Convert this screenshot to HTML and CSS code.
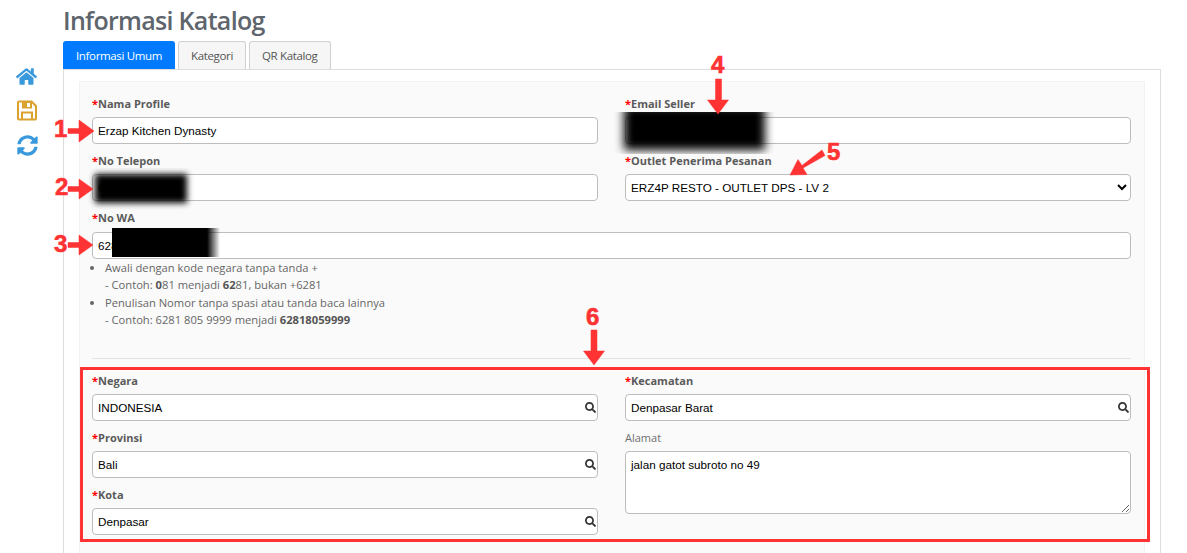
FILE: index.html
```html
<!DOCTYPE html>
<html lang="id">
<head>
<meta charset="utf-8">
<title>Informasi Katalog</title>
<link rel="stylesheet" href="styles.css">
</head>
<body>
<div class="page">
  <aside class="sidebar">
    <svg class="side-icon blue home" viewBox="0 0 576 512"><path d="M280.37 148.26L96 300.11V464a16 16 0 0 0 16 16l112.06-.29a16 16 0 0 0 15.92-16V368a16 16 0 0 1 16-16h64a16 16 0 0 1 16 16v95.64a16 16 0 0 0 16 16.05L464 480a16 16 0 0 0 16-16V300L295.67 148.26a12.19 12.19 0 0 0-15.3 0zM571.6 251.47L488 182.56V44.05a12 12 0 0 0-12-12h-56a12 12 0 0 0-12 12v72.61L318.47 43a48 48 0 0 0-61 0L4.34 251.47a12 12 0 0 0-1.6 16.9l25.5 31A12 12 0 0 0 45.15 301l235.22-193.74a12.19 12.19 0 0 1 15.3 0L530.9 301a12 12 0 0 0 16.9-1.6l25.5-31a12 12 0 0 0-1.7-16.93z"/></svg>
    <svg class="side-icon gold save" viewBox="0 0 20 20"><path fill-rule="evenodd" d="M2 0H15L20 5V18A2 2 0 0 1 18 20H2A2 2 0 0 1 0 18V2A2 2 0 0 1 2 0ZM2 2V18H4V11H16V18H18V6L15 3V8H5V2ZM6 13V18H14V13ZM10 2.500V6.500H13V2.500Z"/></svg>
    <svg class="side-icon blue sync" viewBox="0 0 512 512"><path d="M370.72 133.28C339.458 104.008 298.888 87.962 255.848 88c-77.458.068-144.328 53.178-162.791 126.85-1.344 5.363-6.122 9.15-11.651 9.15H24.103c-7.498 0-13.194-6.807-11.807-14.176C33.933 94.924 134.813 8 256 8c66.448 0 126.791 26.136 171.315 68.685L463.03 40.97C478.149 25.851 504 36.559 504 57.941V192c0 13.255-10.745 24-24 24H345.941c-21.382 0-32.09-25.851-16.971-40.971l41.75-41.749zM32 296h134.059c21.382 0 32.09 25.851 16.971 40.971l-41.75 41.75c31.262 29.273 71.835 45.319 114.876 45.28 77.418-.07 144.315-53.144 162.787-126.849 1.344-5.363 6.122-9.15 11.651-9.15h57.304c7.498 0 13.194 6.807 11.807 14.176C478.067 417.076 377.187 504 256 504c-66.448 0-126.791-26.136-171.315-68.685L48.97 471.03C33.851 486.149 8 475.441 8 454.059V320c0-13.255 10.745-24 24-24z"/></svg>
  </aside>

  <main class="main">
    <h1 class="title">Informasi Katalog</h1>
    <nav class="tabs">
      <a class="tab active">Informasi Umum</a>
      <a class="tab">Kategori</a>
      <a class="tab">QR Katalog</a>
    </nav>
    <div class="pane">
      <form class="panel">
        <div class="grid">
          <div class="field">
            <label class="label"><span class="req">*</span>Nama Profile</label>
            <input class="control" value="Erzap Kitchen Dynasty">
          </div>
          <div class="field">
            <label class="label"><span class="req">*</span>Email Seller</label>
            <input class="control" value="zzzzzzzzzzzzzzzzzzm">
          </div>
          <div class="field">
            <label class="label"><span class="req">*</span>No Telepon</label>
            <input class="control" value="6281">
          </div>
          <div class="field">
            <label class="label"><span class="req">*</span>Outlet Penerima Pesanan</label>
            <select class="control select">
              <option>ERZ4P RESTO - OUTLET DPS - LV 2</option>
            </select>
          </div>
        </div>
        <div class="field wa">
          <label class="label"><span class="req">*</span>No WA</label>
          <input class="control" value="628">
          <ul class="notes">
            <li>Awali dengan kode negara tanpa tanda +<br>- Contoh: <b>0</b>81 menjadi <b>62</b>81, bukan +6281</li>
            <li>Penulisan Nomor tanpa spasi atau tanda baca lainnya<br>- Contoh: 6281 805 9999 menjadi <b>62818059999</b></li>
          </ul>
        </div>
        <hr class="rule">
        <section class="address">
          <div class="address-col">
            <div class="field">
              <label class="label"><span class="req">*</span>Negara</label>
              <div class="search-box">
                <input class="control" value="INDONESIA">
                <svg class="search" viewBox="0 0 512 512"><use href="#search-glyph"/></svg>
              </div>
            </div>
            <div class="field">
              <label class="label"><span class="req">*</span>Provinsi</label>
              <div class="search-box">
                <input class="control" value="Bali">
                <svg class="search" viewBox="0 0 512 512"><use href="#search-glyph"/></svg>
              </div>
            </div>
            <div class="field last">
              <label class="label"><span class="req">*</span>Kota</label>
              <div class="search-box">
                <input class="control" value="Denpasar">
                <svg class="search" viewBox="0 0 512 512"><use href="#search-glyph"/></svg>
              </div>
            </div>
          </div>
          <div class="address-col">
            <div class="field">
              <label class="label"><span class="req">*</span>Kecamatan</label>
              <div class="search-box">
                <input class="control" value="Denpasar Barat">
                <svg class="search" viewBox="0 0 512 512"><use href="#search-glyph"/></svg>
              </div>
            </div>
            <div class="field last">
              <label class="label plain">Alamat</label>
              <textarea class="control area">jalan gatot subroto no 49</textarea>
            </div>
          </div>
        </section>
      </form>
    </div>
  </main>
</div>

<svg class="defs" width="0" height="0"><defs><path id="search-glyph" d="M505 442.7L405.3 343c-4.500-4.500-10.600-7-17-7H372c27.600-35.300 44-79.700 44-128C416 93.100 322.900 0 208 0S0 93.100 0 208s93.100 208 208 208c48.300 0 92.700-16.400 128-44v16.300c0 6.400 2.500 12.500 7 17l99.700 99.700c9.400 9.400 24.600 9.400 33.900 0l28.300-28.300c9.400-9.400 9.400-24.600.1-34zM208 336c-70.700 0-128-57.200-128-128 0-70.700 57.200-128 128-128 70.700 0 128 57.200 128 128 0 70.700-57.200 128-128 128z"/></defs></svg>

<div class="redact-clip clip-phone"><div class="redact"></div></div>
<div class="redact-clip clip-email"><div class="redact"></div></div>
<div class="redact-wa"></div>

<svg class="marks" width="1187" height="553" viewBox="0 0 1187 553">
  <g class="arrows">
    <path d="M68 128.500h11v-8.500l15 11-15 11v-8.500H68z"/>
    <path d="M68 186.500h11v-7.500l14 10-14 10v-7.500H68z"/>
    <path d="M68 242.500h11v-7.500l14 10-14 10v-7.500H68z"/>
    <path d="M715.500 79h6v21h7l-10.500 14-10.500-14h8z"/>
    <path d="M822 150l3 5.500-22 12.500 4 6.500-17 .5 8-15.500 4 6z"/>
    <path d="M591 330h6v21h7.500l-10.500 14-10.500-14h7.500z"/>
  </g>
  <g class="nums">
    <text x="54" y="137">1</text>
    <text x="55" y="195">2</text>
    <text x="54" y="252">3</text>
    <text x="711" y="73">4</text>
    <text x="827" y="160">5</text>
    <text x="586" y="325">6</text>
  </g>
</svg>
</body>
</html>
```
FILE: styles.css
```css
* { box-sizing: border-box; }
html, body { margin: 0; height: 553px; overflow: hidden; background: #fff; }
body { position: relative; font-family: "Open Sans", sans-serif; color: #555; }

.page { display: flex; height: 553px; }
.sidebar { width: 63px; flex: none; display: flex; flex-direction: column; align-items: flex-start; padding: 67px 0 0 16px; }
.side-icon { display: block; }
.blue { fill: #3a98dc; }
.gold { fill: #dca22f; }
.home { width: 21px; height: 19px; margin-bottom: 14px; }
.save { width: 20px; height: 21px; margin: 0 0 14px 1px; }
.sync { width: 21px; height: 21px; margin-left: 0.500px; }

.main { width: 1098px; flex: none; }
.title { margin: 0; height: 41px; font-size: 25px; line-height: 41px; font-weight: 600; letter-spacing: -0.700px; color: #5e656c; }
.tabs { display: flex; gap: 3px; height: 28px; }
.tab { height: 28px; padding: 0 12px; font-size: 11.500px; letter-spacing: -0.350px; line-height: 27px; color: #555; background: #f6f6f6; border: 1px solid #d0d0d0; border-bottom: 0; border-radius: 3px 3px 0 0; }
.tab.active { background: #007bff; border-color: #007bff; color: #fff; }

.pane { border: 1px solid #ddd; border-bottom: 0; padding: 11px 15px 0 15px; height: 484px; }
.panel { background: #fafafa; border: 1px solid #f2f2f2; border-bottom: 0; padding: 15px 13px 0 12px; height: 472px; }

.grid { display: grid; grid-template-columns: 506px 506px; column-gap: 27px; }
.field { margin-bottom: 10px; }
.field.wa { margin-bottom: 0; }
.field.wa .label { margin-bottom: 7px; }
.field.last { margin-bottom: 0; }
.label { display: block; height: 14px; margin-bottom: 6px; font-size: 11px; line-height: 14px; font-weight: 700; color: #5a5a5a; }
.label.plain { font-weight: 400; color: #6f6f6f; }
.req { color: #f00; }

.control { display: block; width: 100%; height: 27px; padding: 0 5px; font-family: "Liberation Sans", Arial, sans-serif; font-size: 11.700px; color: #000; background: #fff; border: 1px solid #bdbdbd; border-radius: 4px; outline: 0; }
.select { padding: 0 1px; }
.area { height: 63px; padding: 6px 5px; line-height: 14px; resize: vertical; }

.notes { margin: 0; padding: 0 0 0 13px; font-size: 11.200px; line-height: 17px; color: #666; }
.notes li + li { margin-top: 1px; }
.notes b { color: #555; }

.rule { height: 1px; margin: 30px 0 8px; border: 0; background: #e3e3e3; }

.address { display: grid; grid-template-columns: 506px 506px; column-gap: 27px; margin: 0 -19px 0 -12px; padding: 4px 16px 4px 9px; border: 3px solid #ff3333; }

.search-box { position: relative; }
.search { position: absolute; right: 2px; top: 8px; width: 11px; height: 11px; fill: #333; }
.defs { position: absolute; }

.redact-clip { position: absolute; overflow: hidden; }
.redact { position: absolute; background: #000; }
.clip-phone { left: 84px; top: 168px; width: 114px; height: 42px; }
.clip-phone .redact { left: 11px; top: 6px; width: 92px; height: 29px; filter: blur(3px); }
.clip-email { left: 612px; top: 112px; width: 166px; height: 42px; }
.clip-email .redact { left: 12px; top: -6px; width: 141px; height: 44px; filter: blur(5px); }
.redact-wa { position: absolute; left: 112px; top: 228px; width: 108px; height: 29px; background: linear-gradient(90deg, #000 88%, rgba(0, 0, 0, 0)); }

.marks { position: absolute; left: 0; top: 0; pointer-events: none; }
.arrows { fill: #ff3333; stroke: #ff3333; stroke-width: 0.500px; stroke-linejoin: round; }
.nums { fill: #ff3333; stroke: #ff3333; stroke-width: 0.600px; font-family: "Liberation Sans", Arial, sans-serif; font-weight: 700; font-size: 24px; }
```
